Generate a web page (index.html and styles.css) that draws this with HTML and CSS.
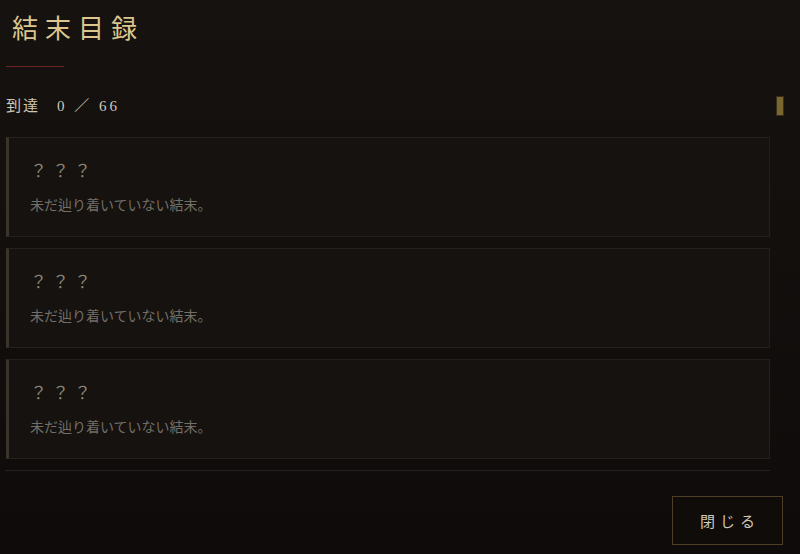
FILE: index.html
```html
<!DOCTYPE html>
<html lang="ja">
<head>
<meta charset="utf-8">
<title>結末目録</title>
<link rel="stylesheet" href="styles.css">
</head>
<body>
<div class="screen">
  <header class="head">
    <h1 class="title">結末目録</h1>
    <div class="rule"></div>
  </header>
  <div class="scroll-wrap">
    <div class="scroller" id="scroller">
      <div class="progress">到達　<span class="num">0 ／ 66</span></div>
      <ul class="list" id="list"></ul>
    </div>
    <div class="thumb" aria-hidden="true"></div>
  </div>
  <footer class="foot">
    <button class="close">閉じる</button>
  </footer>
</div>
<script src="app.js"></script>
</body>
</html>
```

FILE: app.js
```js
var list = document.getElementById('list');
for (var i = 0; i < 66; i++) {
  var li = document.createElement('li');
  li.className = 'card';
  li.innerHTML = '<div class="card-title">？？？</div><div class="card-desc">未だ辿り着いていない結末。</div>';
  list.appendChild(li);
}
```

FILE: styles.css
```css
html, body {
  margin: 0;
  padding: 0;
  height: 100%;
}
body {
  background: linear-gradient(#161210, #0e0b0a);
  font-family: "Liberation Serif", "Noto Sans CJK JP", serif;
  color: #c9c1b2;
  overflow: hidden;
}
.screen {
  height: 554px;
  display: flex;
  flex-direction: column;
}
.head {
  padding: 12px 0 0 6px;
}
.title {
  margin: 0 0 0 6px;
  font-size: 26px;
  line-height: 36px;
  font-weight: 400;
  letter-spacing: 7px;
  color: #dcc68d;
}
.rule {
  width: 58px;
  height: 1px;
  background: #6e2424;
  margin-top: 18px;
}
.scroll-wrap {
  position: relative;
  margin-top: 29px;
  width: 784px;
}
.scroller {
  height: 375px;
  overflow-y: scroll;
  padding: 0 14px 0 6px;
  box-sizing: border-box;
  width: 784px;
  scrollbar-width: none;
}
.scroller::-webkit-scrollbar {
  display: none;
}
.thumb {
  position: absolute;
  left: 776px;
  top: 0;
  width: 6px;
  height: 18px;
  background: #7a6630;
  border: 1px solid #3a2f16;
}
.progress {
  font-size: 15px;
  line-height: 20px;
  letter-spacing: 2px;
  color: #cfc7b8;
}
.num {
  letter-spacing: 3px;
}
.list {
  list-style: none;
  margin: 21px 0 0;
  padding: 0;
  display: flex;
  flex-direction: column;
  gap: 11px;
}
.card {
  height: 100px;
  box-sizing: border-box;
  background: #16120f;
  border: 1px solid #271f1b;
  border-left: 3px solid #3b342c;
  padding: 20px 0 0 21px;
}
.card-title {
  font-size: 17px;
  line-height: 24px;
  letter-spacing: 5px;
  color: #8b8273;
  font-family: "Noto Sans CJK JP", sans-serif;
}
.card-desc {
  margin-top: 11px;
  font-size: 14px;
  line-height: 22px;
  color: #736e67;
  font-family: "Noto Sans CJK JP", sans-serif;
}
.foot {
  flex: 1;
  display: flex;
  justify-content: flex-end;
  align-items: flex-start;
  padding: 25px 17px 0 0;
}
.close {
  width: 111px;
  height: 49px;
  background: #0f0c0a;
  border: 1px solid #4d3f25;
  color: #cfc7b8;
  font-family: "Noto Sans CJK JP", sans-serif;
  font-size: 15px;
  letter-spacing: 5px;
  padding: 0 0 0 5px;
  cursor: pointer;
}
```
